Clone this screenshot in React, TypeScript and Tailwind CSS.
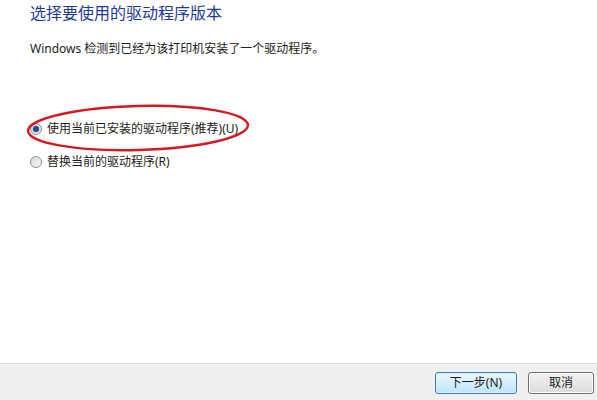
import { useState } from 'react';

const font = { fontFamily: '"Noto Sans", "Noto Sans CJK SC", sans-serif' };

function Radio({ checked, label, onClick }: { checked: boolean; label: string; onClick: () => void }) {
  return (
    <button type="button" onClick={onClick} className="flex items-center gap-[5px] text-[12px] text-[#1b1b1b] leading-[16px]">
      <span className="relative w-[12px] h-[12px] rounded-full border border-[#8e8f8f] bg-gradient-to-br from-[#d8d8d8] to-[#f8f8f8] flex items-center justify-center">
        {checked && <span className="w-[6px] h-[6px] rounded-full bg-[#1d4f8a] shadow-[0_0_2px_#5aa0e0]" />}
      </span>
      <span>{label}</span>
    </button>
  );
}

export default function App() {
  const [choice, setChoice] = useState(0);

  return (
    <div className="w-[597px] h-[400px] flex flex-col bg-white" style={font}>
      <div className="flex-1 flex flex-col pl-[30px] relative">
        <div className="pt-[3px] text-[16px] leading-[20px] text-[#1e3a96]">选择要使用的驱动程序版本</div>
        <div className="mt-[18px] text-[12px] leading-[16px] text-[#1b1b1b]">Windows 检测到已经为该打印机安装了一个驱动程序。</div>
        <div className="mt-[64px] flex flex-col items-start gap-[17px]">
          <Radio checked={choice === 0} label="使用当前已安装的驱动程序(推荐)(U)" onClick={() => setChoice(0)} />
          <Radio checked={choice === 1} label="替换当前的驱动程序(R)" onClick={() => setChoice(1)} />
        </div>
        {/* red hand-drawn annotation around the first option */}
        <svg className="absolute left-[24px] top-[102px] pointer-events-none" width="228" height="52" viewBox="0 0 228 52">
          <ellipse cx="114" cy="26" rx="110" ry="22" fill="none" stroke="#d6191f" strokeWidth="2.4" transform="rotate(-1.5 114 26)" />
        </svg>
      </div>
      <div className="h-[37px] border-t border-[#dcdcdc] bg-[#f0f0f0] flex items-start justify-end gap-[11px] pt-[8px] pr-[3px]">
        <button className="w-[82px] h-[22px] rounded-[3px] border border-[#3c7fb1] bg-gradient-to-b from-[#eaf6fd] to-[#bee6fd] text-[12px] text-[#1b1b1b] shadow-[inset_0_0_0_1px_#d8f0fb]">下一步(N)</button>
        <button className="w-[66px] h-[22px] rounded-[3px] border border-[#707070] bg-gradient-to-b from-[#f2f2f2] to-[#dcdcdc] text-[12px] text-[#1b1b1b] shadow-[inset_0_0_0_1px_#fbfbfb]">取消</button>
      </div>
    </div>
  );
}
